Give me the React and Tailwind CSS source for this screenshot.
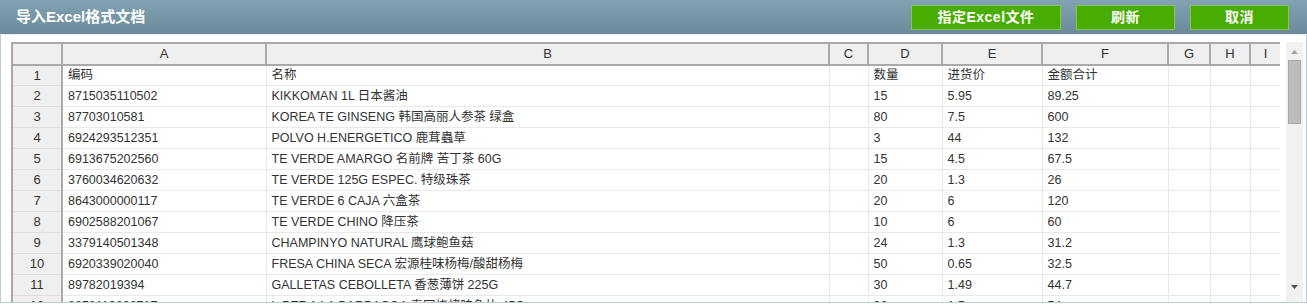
import React from 'react';

// --- Data ---
const COLS = [
  { key: 'n', label: '', w: 50 },
  { key: 'A', label: 'A', w: 204 },
  { key: 'B', label: 'B', w: 563 },
  { key: 'C', label: 'C', w: 39 },
  { key: 'D', label: 'D', w: 74 },
  { key: 'E', label: 'E', w: 100 },
  { key: 'F', label: 'F', w: 126 },
  { key: 'G', label: 'G', w: 42 },
  { key: 'H', label: 'H', w: 40 },
  { key: 'I', label: 'I', w: 31 },
];

const ROWS = [
  ['编码', '名称', '', '数量', '进货价', '金额合计'],
  ['8715035110502', 'KIKKOMAN 1L 日本酱油', '', '15', '5.95', '89.25'],
  ['87703010581', 'KOREA TE GINSENG 韩国高丽人参茶 绿盒', '', '80', '7.5', '600'],
  ['6924293512351', 'POLVO H.ENERGETICO 鹿茸蟲草', '', '3', '44', '132'],
  ['6913675202560', 'TE VERDE AMARGO 名前牌 苦丁茶 60G', '', '15', '4.5', '67.5'],
  ['3760034620632', 'TE VERDE 125G ESPEC. 特级珠茶', '', '20', '1.3', '26'],
  ['8643000000117', 'TE VERDE 6 CAJA 六盒茶', '', '20', '6', '120'],
  ['6902588201067', 'TE VERDE CHINO 降压茶', '', '10', '6', '60'],
  ['3379140501348', 'CHAMPINYO NATURAL 鹰球鲍鱼菇', '', '24', '1.3', '31.2'],
  ['6920339020040', 'FRESA CHINA SECA 宏源桂味杨梅/酸甜杨梅', '', '50', '0.65', '32.5'],
  ['89782019394', 'GALLETAS CEBOLLETA 香葱薄饼 225G', '', '30', '1.49', '44.7'],
  ['8858113808717', 'L.PEZ A LA BARBACOA 泰国烧烤味鱼片 45G', '', '36', '1.5', '54'],
];

const FONT = { fontFamily: '"Liberation Sans", Arial, "Noto Sans CJK SC", sans-serif' };

const GreenButton = ({ children, width }) => (
  <button
    className={`${width} h-[25px] flex items-center justify-center bg-[#48ad00] border border-[#86c45a] text-white text-[14px] font-bold tracking-[0.5px]`}
  >
    {children}
  </button>
);

const ScrollBar = () => (
  <div className="w-[17px] h-full bg-[#f1f1f1] flex flex-col items-center">
    <div className="h-[14px] w-full flex items-center justify-center mt-[3px]">
      <svg width="7" height="4" viewBox="0 0 7 4">
        <path d="M0 4 L3.5 0 L7 4 Z" fill="#a3a3a3" />
      </svg>
    </div>
    <div className="w-[13px] h-[64px] bg-[#bcbcbc] border border-[#a9a9a9] mt-[1px]" />
    <div className="flex-1" />
    <div className="h-[14px] w-full flex items-center justify-center mb-[8px]">
      <svg width="7" height="4" viewBox="0 0 7 4">
        <path d="M0 0 L7 0 L3.5 4 Z" fill="#505050" />
      </svg>
    </div>
  </div>
);

export default function App() {
  return (
    <div className="w-[1307px] h-[304px] bg-white overflow-hidden text-[#333]" style={FONT}>
      {/* --- Title bar --- */}
      <div className="h-[34px] flex items-center justify-between pl-[16px] pr-[18px] bg-gradient-to-b from-[#82a3b3] to-[#6b8999]">
        <h1 className="text-white text-[15px] font-bold">导入Excel格式文档</h1>
        <div className="flex items-center gap-[15px]">
          <GreenButton width="w-[150px]">指定Excel文件</GreenButton>
          <GreenButton width="w-[99px]">刷新</GreenButton>
          <GreenButton width="w-[99px]">取消</GreenButton>
        </div>
      </div>
      <div className="h-[1px] bg-[#e8eef2]" />

      {/* --- Sheet panel --- */}
      <div className="h-[268px] border-l border-r border-b border-[#bccbd6] flex pl-[10px] pt-[7px] overflow-hidden">
        <div className="w-[1269px] overflow-hidden">
          <table className="table-fixed border-collapse text-[12.5px]" style={{ width: 1269 }}>
            <colgroup>
              {COLS.map((c) => (
                <col key={c.key} style={{ width: c.w }} />
              ))}
            </colgroup>
            <thead>
              <tr className="h-[21px]">
                {COLS.map((c) => (
                  <th
                    key={c.key}
                    className="bg-[#efefef] border-2 border-[#a9a9a9] font-normal text-[13px] text-[#333] text-center p-0"
                  >
                    {c.label}
                  </th>
                ))}
              </tr>
            </thead>
            <tbody>
              {ROWS.map((row, i) => (
                <tr key={i} className="h-[21px]">
                  <td className="bg-[#efefef] border-x-2 border-b border-x-[#a9a9a9] border-b-[#dedede] text-center text-[13px] p-0">
                    {i + 1}
                  </td>
                  {row.map((cell, j) => (
                    <td
                      key={j}
                      className="border border-[#e9e9e9] pl-[5px] p-0 whitespace-nowrap overflow-hidden"
                    >
                      {cell}
                    </td>
                  ))}
                  <td className="border border-[#e9e9e9]" />
                  <td className="border border-[#e9e9e9]" />
                  <td className="border border-[#e9e9e9]" />
                </tr>
              ))}
            </tbody>
          </table>
        </div>
        <div className="ml-[6px] h-full">
          <ScrollBar />
        </div>
      </div>
    </div>
  );
}
